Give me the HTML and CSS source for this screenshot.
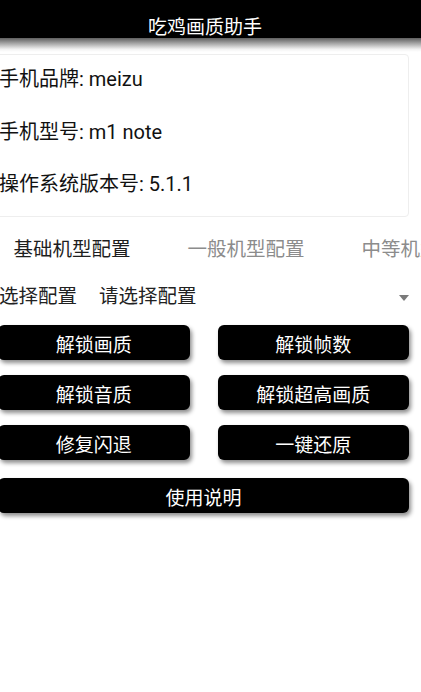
FILE: index.html
```html
<!DOCTYPE html>
<html lang="zh-CN">
<head>
<meta charset="utf-8">
<title>吃鸡画质助手</title>
<link rel="stylesheet" href="styles.css">
</head>
<body>
<div class="page">
  <header class="appbar">
    <div class="title">吃鸡画质助手</div>
  </header>
  <div class="appbar-shadow"></div>

  <section class="card">
    <div class="info">手机品牌: meizu</div>
    <div class="info">手机型号: m1 note</div>
    <div class="info">操作系统版本号: 5.1.1</div>
  </section>

  <nav class="tabs">
    <div class="tab active">基础机型配置</div>
    <div class="tab">一般机型配置</div>
    <div class="tab">中等机型配置</div>
  </nav>

  <div class="select-row">
    <span class="select-label">选择配置</span>
    <span class="select-value">请选择配置</span>
    <span class="caret"></span>
  </div>

  <div class="buttons">
    <div class="btn">解锁画质</div>
    <div class="btn">解锁帧数</div>
    <div class="btn">解锁音质</div>
    <div class="btn">解锁超高画质</div>
    <div class="btn">修复闪退</div>
    <div class="btn">一键还原</div>
    <div class="btn wide">使用说明</div>
  </div>
</div>
</body>
</html>
```

FILE: styles.css
```css
html, body {
  margin: 0;
  padding: 0;
  background: #ffffff;
}

body {
  font-family: "Roboto", "Noto Sans CJK SC", sans-serif;
  color: #1c1c1c;
}

.page {
  width: 421px;
  height: 692px;
  overflow: hidden;
}

.appbar {
  background: #000000;
  height: 20px;
  padding-top: 18px;
  display: flex;
  justify-content: center;
}

.title {
  color: #ffffff;
  font-size: 19px;
  line-height: 20px;
  padding-right: 11px;
}

.appbar-shadow {
  height: 14px;
  background: linear-gradient(#5e5e5e, #f2f2f2 80%, #ffffff);
}

.card {
  margin: 2px 0 0 -6px;
  width: 415px;
  box-sizing: border-box;
  border: 1px solid #eeeeee;
  border-radius: 4px;
  padding: 12px 0 20px 5px;
  display: flex;
  flex-direction: column;
  gap: 28.5px;
}

.info {
  font-size: 20px;
  line-height: 24px;
  color: #111111;
  margin-left: -1px;
}

.tabs {
  display: flex;
  margin-left: -15px;
  padding: 21px 0 23px;
  white-space: nowrap;
}

.tab {
  flex: 0 0 174px;
  text-align: center;
  font-size: 19.5px;
  line-height: 24px;
  color: #8c8c8c;
}

.tab.active {
  color: #1e1e1e;
}

.select-row {
  display: flex;
  align-items: center;
  height: 24px;
  font-size: 19.5px;
  line-height: 24px;
  color: #222222;
  padding-right: 12px;
}

.select-label {
  margin-left: -1px;
}

.select-value {
  margin-left: 22px;
  flex: 1;
}

.caret {
  width: 0;
  height: 0;
  border-left: 5.5px solid transparent;
  border-right: 5.5px solid transparent;
  border-top: 6px solid #7a7a7a;
  margin-top: 2px;
}

.buttons {
  margin: 16px 0 0 -2px;
  width: 411px;
  display: grid;
  grid-template-columns: 1fr 1fr;
  column-gap: 28px;
  row-gap: 15px;
}

.btn {
  height: 35px;
  box-sizing: border-box;
  padding-top: 7px;
  background: #000000;
  color: #ffffff;
  border-radius: 6px;
  box-shadow: 2px 3px 4px rgba(0, 0, 0, 0.45);
  display: flex;
  align-items: center;
  justify-content: center;
  font-size: 19px;
  line-height: 22px;
}

.btn.wide {
  grid-column: 1 / span 2;
  margin-top: 3px;
}
```
